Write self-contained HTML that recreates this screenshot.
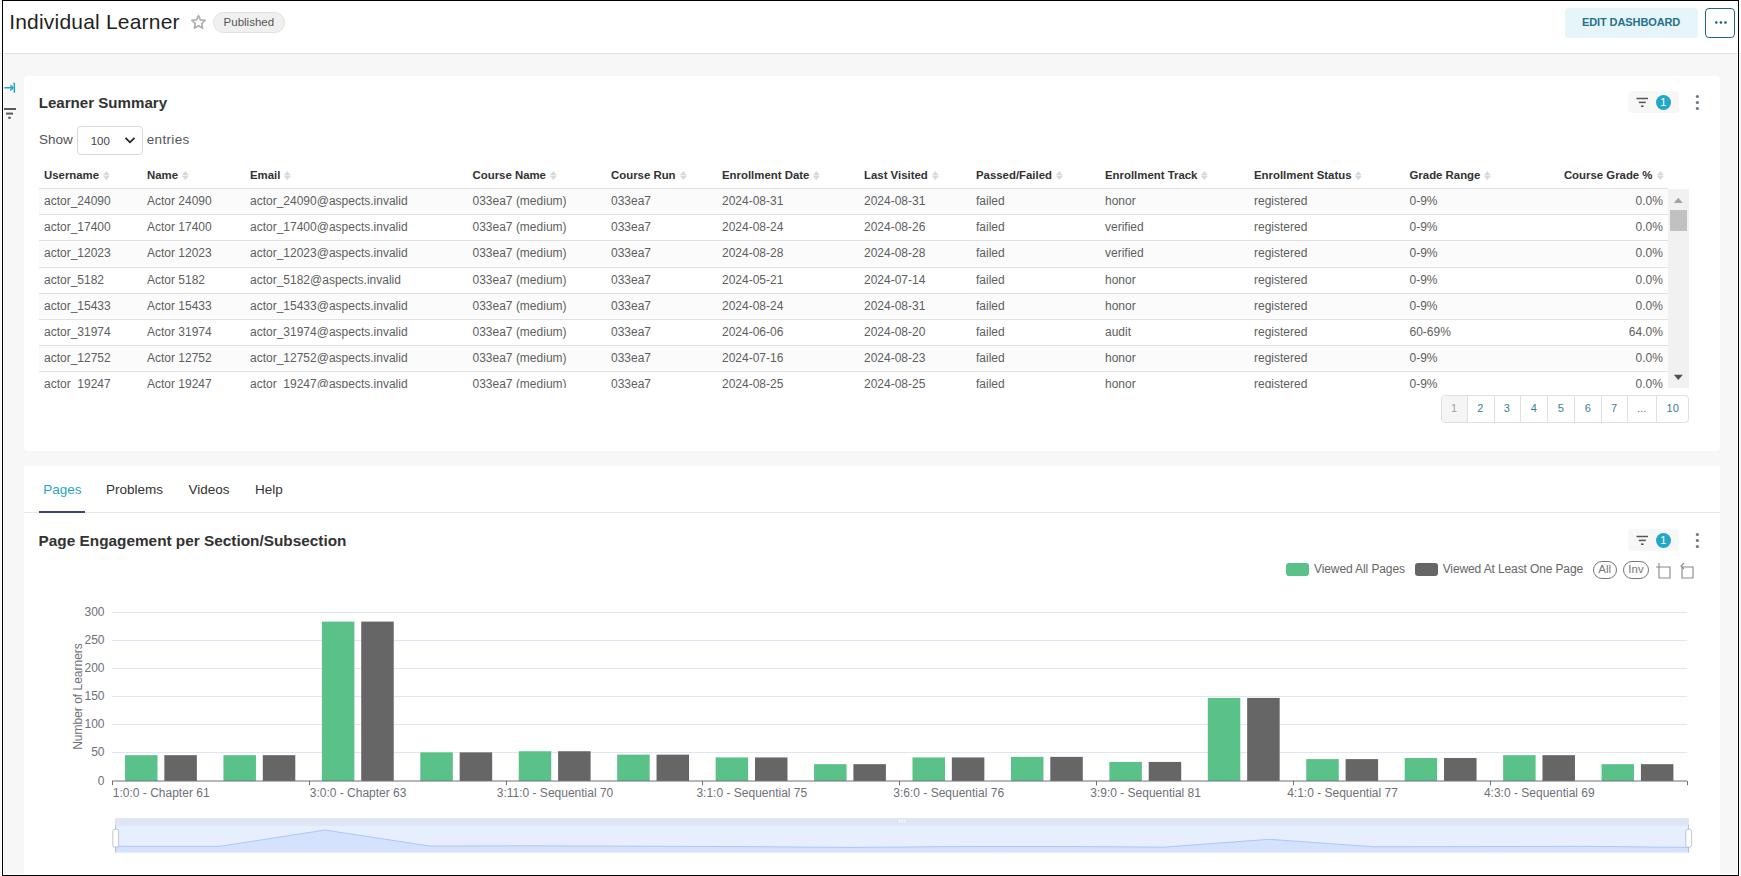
<!DOCTYPE html>
<html><head><meta charset="utf-8">
<style>
*{box-sizing:border-box;margin:0;padding:0}
html,body{width:1741px;height:876px;overflow:hidden;background:#f7f7f7;font-family:"Liberation Sans",sans-serif;color:#323232;position:relative}
.abs{position:absolute}
.t{position:absolute;white-space:nowrap;line-height:1}
#frame{position:absolute;left:1px;top:-1px;width:1739px;height:878px;border:1px solid #fff;pointer-events:none}
#frame>div{width:100%;height:100%;border:1px solid #000}
#frame>div>div{width:100%;height:100%;border:1px solid #fff}
</style></head><body>
<div class="abs" style="left:0px;top:0px;width:1741px;height:54px;background:#fff;border-bottom:1px solid #e0e0e0"></div>
<div class="t" style="left:9.2px;top:11.02px;font-size:21px;color:#1f1f1f;font-weight:normal;letter-spacing:0.2px">Individual Learner</div>
<svg class="abs" style="left:190px;top:14px" width="17" height="16" viewBox="0 0 17 16"><path d="M8.5 1.6l1.95 4.3 4.65.5-3.5 3.15 1 4.6L8.5 11.8l-4.1 2.35 1-4.6L1.9 6.4l4.65-.5z" fill="none" stroke="#b0b0b0" stroke-width="1.7" stroke-linejoin="round"/></svg>
<div class="abs" style="left:213px;top:12px;width:72px;height:21px;background:#f0f0f0;border:1px solid #e0e0e0;border-radius:11px"></div>
<div class="t" style="left:223.6px;top:17.27px;font-size:11.5px;color:#555;font-weight:normal;">Published</div>
<div class="abs" style="left:1565px;top:8px;width:133px;height:30px;background:#e6f5fa;border-radius:4px"></div>
<div class="t" style="left:1582.0px;top:17.29px;font-size:11px;color:#24718a;font-weight:bold;letter-spacing:-0.1px">EDIT DASHBOARD</div>
<div class="abs" style="left:1705px;top:8px;width:30px;height:30px;background:#fff;border:1px solid #1b6a83;border-radius:4px"></div>
<svg class="abs" style="left:1712px;top:20px" width="16" height="5"><circle cx="4.3" cy="2.5" r="1.3" fill="#1b5a70"/><circle cx="8.9" cy="2.5" r="1.3" fill="#1b5a70"/><circle cx="13.5" cy="2.5" r="1.3" fill="#1b5a70"/></svg>
<svg class="abs" style="left:3px;top:81px" width="14" height="13"><path d="M1.3 6.8h9M7.3 4.2l2.7 2.6-2.7 2.6" fill="none" stroke="#20a7c9" stroke-width="1.4"/><path d="M11.3 1.6v10.2" stroke="#20a7c9" stroke-width="1.5"/></svg>
<svg class="abs" style="left:3px;top:106px" width="15" height="15"><path d="M0 3h13" stroke="#5a5a5a" stroke-width="2"/><path d="M3 7.6h7" stroke="#5a5a5a" stroke-width="2"/><path d="M5.2 11.8h2.6" stroke="#5a5a5a" stroke-width="2"/></svg>
<div class="abs" style="left:24px;top:76px;width:1696px;height:375px;background:#fff;border-radius:4px"></div>
<div class="abs" style="left:24px;top:466px;width:1696px;height:420px;background:#fff"></div>
<div class="t" style="left:38.7px;top:95.22px;font-size:15.1px;color:#323232;font-weight:bold;">Learner Summary</div>
<div class="abs" style="left:1628px;top:91px;width:51px;height:22px;background:#f7f7f7;border-radius:4px"></div>
<svg class="abs" style="left:1636px;top:97px" width="13" height="11"><path d="M0.5 1.5h11.5" stroke="#555" stroke-width="1.5"/><path d="M2.8 5.4h7" stroke="#555" stroke-width="1.5"/><path d="M5 9.2h2.6" stroke="#555" stroke-width="1.6"/></svg>
<div class="abs" style="left:1655.7px;top:94.8px;width:15.4px;height:15.4px;border-radius:50%;background:#20a7c9;color:#fff;font-size:11px;font-weight:normal;line-height:15.4px;text-align:center">1</div>
<svg class="abs" style="left:1694px;top:94px" width="7" height="17"><circle cx="3.4" cy="2.5" r="1.6" fill="#6d7780"/><circle cx="3.4" cy="8.5" r="1.6" fill="#6d7780"/><circle cx="3.4" cy="14.5" r="1.6" fill="#6d7780"/></svg>
<div class="t" style="left:39.0px;top:132.67px;font-size:13.5px;color:#555;font-weight:normal;">Show</div>
<div class="abs" style="left:77px;top:126px;width:66px;height:29px;background:#fff;border:1px solid #d9d9d9;border-radius:4px"></div>
<div class="t" style="left:90.7px;top:136.27px;font-size:11.5px;color:#444;font-weight:normal;">100</div>
<svg class="abs" style="left:124px;top:136px" width="12" height="9"><path d="M1.5 1.8l4.5 4.5 4.5-4.5" fill="none" stroke="#222" stroke-width="1.8"/></svg>
<div class="t" style="left:146.7px;top:132.67px;font-size:13.5px;color:#555;font-weight:normal;letter-spacing:0.35px">entries</div>
<div class="t" style="left:44.0px;top:170.25px;font-size:11.4px;color:#323232;font-weight:bold;">Username</div>
<svg class="abs" style="left:103.0px;top:170.7px" width="8" height="10"><path d="M0.3 4.1L3.35 0.3 6.4 4.1z M0.3 5.1L3.35 9 6.4 5.1z" fill="#d9d9d9" stroke="#d9d9d9" stroke-width="0.4" stroke-linejoin="round"/></svg>
<div class="t" style="left:147.0px;top:170.25px;font-size:11.4px;color:#323232;font-weight:bold;">Name</div>
<svg class="abs" style="left:181.9px;top:170.7px" width="8" height="10"><path d="M0.3 4.1L3.35 0.3 6.4 4.1z M0.3 5.1L3.35 9 6.4 5.1z" fill="#d9d9d9" stroke="#d9d9d9" stroke-width="0.4" stroke-linejoin="round"/></svg>
<div class="t" style="left:250.0px;top:170.25px;font-size:11.4px;color:#323232;font-weight:bold;">Email</div>
<svg class="abs" style="left:284.3px;top:170.7px" width="8" height="10"><path d="M0.3 4.1L3.35 0.3 6.4 4.1z M0.3 5.1L3.35 9 6.4 5.1z" fill="#d9d9d9" stroke="#d9d9d9" stroke-width="0.4" stroke-linejoin="round"/></svg>
<div class="t" style="left:472.5px;top:170.25px;font-size:11.4px;color:#323232;font-weight:bold;">Course Name</div>
<svg class="abs" style="left:549.8px;top:170.7px" width="8" height="10"><path d="M0.3 4.1L3.35 0.3 6.4 4.1z M0.3 5.1L3.35 9 6.4 5.1z" fill="#d9d9d9" stroke="#d9d9d9" stroke-width="0.4" stroke-linejoin="round"/></svg>
<div class="t" style="left:611.0px;top:170.25px;font-size:11.4px;color:#323232;font-weight:bold;">Course Run</div>
<svg class="abs" style="left:679.5px;top:170.7px" width="8" height="10"><path d="M0.3 4.1L3.35 0.3 6.4 4.1z M0.3 5.1L3.35 9 6.4 5.1z" fill="#d9d9d9" stroke="#d9d9d9" stroke-width="0.4" stroke-linejoin="round"/></svg>
<div class="t" style="left:722.0px;top:170.25px;font-size:11.4px;color:#323232;font-weight:bold;">Enrollment Date</div>
<svg class="abs" style="left:813.2px;top:170.7px" width="8" height="10"><path d="M0.3 4.1L3.35 0.3 6.4 4.1z M0.3 5.1L3.35 9 6.4 5.1z" fill="#d9d9d9" stroke="#d9d9d9" stroke-width="0.4" stroke-linejoin="round"/></svg>
<div class="t" style="left:864.0px;top:170.25px;font-size:11.4px;color:#323232;font-weight:bold;">Last Visited</div>
<svg class="abs" style="left:931.6px;top:170.7px" width="8" height="10"><path d="M0.3 4.1L3.35 0.3 6.4 4.1z M0.3 5.1L3.35 9 6.4 5.1z" fill="#d9d9d9" stroke="#d9d9d9" stroke-width="0.4" stroke-linejoin="round"/></svg>
<div class="t" style="left:976.0px;top:170.25px;font-size:11.4px;color:#323232;font-weight:bold;">Passed/Failed</div>
<svg class="abs" style="left:1055.9px;top:170.7px" width="8" height="10"><path d="M0.3 4.1L3.35 0.3 6.4 4.1z M0.3 5.1L3.35 9 6.4 5.1z" fill="#d9d9d9" stroke="#d9d9d9" stroke-width="0.4" stroke-linejoin="round"/></svg>
<div class="t" style="left:1105.0px;top:170.25px;font-size:11.4px;color:#323232;font-weight:bold;">Enrollment Track</div>
<svg class="abs" style="left:1201.3px;top:170.7px" width="8" height="10"><path d="M0.3 4.1L3.35 0.3 6.4 4.1z M0.3 5.1L3.35 9 6.4 5.1z" fill="#d9d9d9" stroke="#d9d9d9" stroke-width="0.4" stroke-linejoin="round"/></svg>
<div class="t" style="left:1254.0px;top:170.25px;font-size:11.4px;color:#323232;font-weight:bold;">Enrollment Status</div>
<svg class="abs" style="left:1355.4px;top:170.7px" width="8" height="10"><path d="M0.3 4.1L3.35 0.3 6.4 4.1z M0.3 5.1L3.35 9 6.4 5.1z" fill="#d9d9d9" stroke="#d9d9d9" stroke-width="0.4" stroke-linejoin="round"/></svg>
<div class="t" style="left:1409.5px;top:170.25px;font-size:11.4px;color:#323232;font-weight:bold;">Grade Range</div>
<svg class="abs" style="left:1484.3px;top:170.7px" width="8" height="10"><path d="M0.3 4.1L3.35 0.3 6.4 4.1z M0.3 5.1L3.35 9 6.4 5.1z" fill="#d9d9d9" stroke="#d9d9d9" stroke-width="0.4" stroke-linejoin="round"/></svg>
<div class="t" style="right:88.5px;top:170.25px;font-size:11.4px;color:#323232;font-weight:bold;">Course Grade %</div>
<svg class="abs" style="left:1656.6px;top:170.7px" width="8" height="10"><path d="M0.3 4.1L3.35 0.3 6.4 4.1z M0.3 5.1L3.35 9 6.4 5.1z" fill="#d9d9d9" stroke="#d9d9d9" stroke-width="0.4" stroke-linejoin="round"/></svg>
<div class="abs" style="left:39px;top:188px;width:1629px;height:1px;background:#e0e0e0"></div>
<div class="abs" style="left:39px;top:189px;width:1629px;height:199px;overflow:hidden">
<div class="abs" style="left:0;top:0px;width:1629px;height:24px;background:#fbfbfb"></div>
<div class="abs" style="left:0;top:25px;width:1629px;height:1px;background:#e0e0e0"></div>
<div class="t" style="left:5.0px;top:6.24px;font-size:12px;color:#5e5e5e">actor_24090</div>
<div class="t" style="left:108.0px;top:6.24px;font-size:12px;color:#5e5e5e">Actor 24090</div>
<div class="t" style="left:211.0px;top:6.24px;font-size:12px;color:#5e5e5e">actor_24090@aspects.invalid</div>
<div class="t" style="left:433.5px;top:6.24px;font-size:12px;color:#5e5e5e">033ea7 (medium)</div>
<div class="t" style="left:572.0px;top:6.24px;font-size:12px;color:#5e5e5e">033ea7</div>
<div class="t" style="left:683.0px;top:6.24px;font-size:12px;color:#5e5e5e">2024-08-31</div>
<div class="t" style="left:825.0px;top:6.24px;font-size:12px;color:#5e5e5e">2024-08-31</div>
<div class="t" style="left:937.0px;top:6.24px;font-size:12px;color:#5e5e5e">failed</div>
<div class="t" style="left:1066.0px;top:6.24px;font-size:12px;color:#5e5e5e">honor</div>
<div class="t" style="left:1215.0px;top:6.24px;font-size:12px;color:#5e5e5e">registered</div>
<div class="t" style="left:1370.5px;top:6.24px;font-size:12px;color:#5e5e5e">0-9%</div>
<div class="t" style="right:5.2px;top:6.24px;font-size:12px;color:#5e5e5e">0.0%</div>
<div class="abs" style="left:0;top:26px;width:1629px;height:24px;background:#fff"></div>
<div class="abs" style="left:0;top:51px;width:1629px;height:1px;background:#e0e0e0"></div>
<div class="t" style="left:5.0px;top:32.24px;font-size:12px;color:#5e5e5e">actor_17400</div>
<div class="t" style="left:108.0px;top:32.24px;font-size:12px;color:#5e5e5e">Actor 17400</div>
<div class="t" style="left:211.0px;top:32.24px;font-size:12px;color:#5e5e5e">actor_17400@aspects.invalid</div>
<div class="t" style="left:433.5px;top:32.24px;font-size:12px;color:#5e5e5e">033ea7 (medium)</div>
<div class="t" style="left:572.0px;top:32.24px;font-size:12px;color:#5e5e5e">033ea7</div>
<div class="t" style="left:683.0px;top:32.24px;font-size:12px;color:#5e5e5e">2024-08-24</div>
<div class="t" style="left:825.0px;top:32.24px;font-size:12px;color:#5e5e5e">2024-08-26</div>
<div class="t" style="left:937.0px;top:32.24px;font-size:12px;color:#5e5e5e">failed</div>
<div class="t" style="left:1066.0px;top:32.24px;font-size:12px;color:#5e5e5e">verified</div>
<div class="t" style="left:1215.0px;top:32.24px;font-size:12px;color:#5e5e5e">registered</div>
<div class="t" style="left:1370.5px;top:32.24px;font-size:12px;color:#5e5e5e">0-9%</div>
<div class="t" style="right:5.2px;top:32.24px;font-size:12px;color:#5e5e5e">0.0%</div>
<div class="abs" style="left:0;top:52px;width:1629px;height:25px;background:#fbfbfb"></div>
<div class="abs" style="left:0;top:78px;width:1629px;height:1px;background:#e0e0e0"></div>
<div class="t" style="left:5.0px;top:58.24px;font-size:12px;color:#5e5e5e">actor_12023</div>
<div class="t" style="left:108.0px;top:58.24px;font-size:12px;color:#5e5e5e">Actor 12023</div>
<div class="t" style="left:211.0px;top:58.24px;font-size:12px;color:#5e5e5e">actor_12023@aspects.invalid</div>
<div class="t" style="left:433.5px;top:58.24px;font-size:12px;color:#5e5e5e">033ea7 (medium)</div>
<div class="t" style="left:572.0px;top:58.24px;font-size:12px;color:#5e5e5e">033ea7</div>
<div class="t" style="left:683.0px;top:58.24px;font-size:12px;color:#5e5e5e">2024-08-28</div>
<div class="t" style="left:825.0px;top:58.24px;font-size:12px;color:#5e5e5e">2024-08-28</div>
<div class="t" style="left:937.0px;top:58.24px;font-size:12px;color:#5e5e5e">failed</div>
<div class="t" style="left:1066.0px;top:58.24px;font-size:12px;color:#5e5e5e">verified</div>
<div class="t" style="left:1215.0px;top:58.24px;font-size:12px;color:#5e5e5e">registered</div>
<div class="t" style="left:1370.5px;top:58.24px;font-size:12px;color:#5e5e5e">0-9%</div>
<div class="t" style="right:5.2px;top:58.24px;font-size:12px;color:#5e5e5e">0.0%</div>
<div class="abs" style="left:0;top:79px;width:1629px;height:24px;background:#fff"></div>
<div class="abs" style="left:0;top:104px;width:1629px;height:1px;background:#e0e0e0"></div>
<div class="t" style="left:5.0px;top:85.24px;font-size:12px;color:#5e5e5e">actor_5182</div>
<div class="t" style="left:108.0px;top:85.24px;font-size:12px;color:#5e5e5e">Actor 5182</div>
<div class="t" style="left:211.0px;top:85.24px;font-size:12px;color:#5e5e5e">actor_5182@aspects.invalid</div>
<div class="t" style="left:433.5px;top:85.24px;font-size:12px;color:#5e5e5e">033ea7 (medium)</div>
<div class="t" style="left:572.0px;top:85.24px;font-size:12px;color:#5e5e5e">033ea7</div>
<div class="t" style="left:683.0px;top:85.24px;font-size:12px;color:#5e5e5e">2024-05-21</div>
<div class="t" style="left:825.0px;top:85.24px;font-size:12px;color:#5e5e5e">2024-07-14</div>
<div class="t" style="left:937.0px;top:85.24px;font-size:12px;color:#5e5e5e">failed</div>
<div class="t" style="left:1066.0px;top:85.24px;font-size:12px;color:#5e5e5e">honor</div>
<div class="t" style="left:1215.0px;top:85.24px;font-size:12px;color:#5e5e5e">registered</div>
<div class="t" style="left:1370.5px;top:85.24px;font-size:12px;color:#5e5e5e">0-9%</div>
<div class="t" style="right:5.2px;top:85.24px;font-size:12px;color:#5e5e5e">0.0%</div>
<div class="abs" style="left:0;top:105px;width:1629px;height:24px;background:#fbfbfb"></div>
<div class="abs" style="left:0;top:130px;width:1629px;height:1px;background:#e0e0e0"></div>
<div class="t" style="left:5.0px;top:111.24px;font-size:12px;color:#5e5e5e">actor_15433</div>
<div class="t" style="left:108.0px;top:111.24px;font-size:12px;color:#5e5e5e">Actor 15433</div>
<div class="t" style="left:211.0px;top:111.24px;font-size:12px;color:#5e5e5e">actor_15433@aspects.invalid</div>
<div class="t" style="left:433.5px;top:111.24px;font-size:12px;color:#5e5e5e">033ea7 (medium)</div>
<div class="t" style="left:572.0px;top:111.24px;font-size:12px;color:#5e5e5e">033ea7</div>
<div class="t" style="left:683.0px;top:111.24px;font-size:12px;color:#5e5e5e">2024-08-24</div>
<div class="t" style="left:825.0px;top:111.24px;font-size:12px;color:#5e5e5e">2024-08-31</div>
<div class="t" style="left:937.0px;top:111.24px;font-size:12px;color:#5e5e5e">failed</div>
<div class="t" style="left:1066.0px;top:111.24px;font-size:12px;color:#5e5e5e">honor</div>
<div class="t" style="left:1215.0px;top:111.24px;font-size:12px;color:#5e5e5e">registered</div>
<div class="t" style="left:1370.5px;top:111.24px;font-size:12px;color:#5e5e5e">0-9%</div>
<div class="t" style="right:5.2px;top:111.24px;font-size:12px;color:#5e5e5e">0.0%</div>
<div class="abs" style="left:0;top:131px;width:1629px;height:24px;background:#fff"></div>
<div class="abs" style="left:0;top:156px;width:1629px;height:1px;background:#e0e0e0"></div>
<div class="t" style="left:5.0px;top:137.24px;font-size:12px;color:#5e5e5e">actor_31974</div>
<div class="t" style="left:108.0px;top:137.24px;font-size:12px;color:#5e5e5e">Actor 31974</div>
<div class="t" style="left:211.0px;top:137.24px;font-size:12px;color:#5e5e5e">actor_31974@aspects.invalid</div>
<div class="t" style="left:433.5px;top:137.24px;font-size:12px;color:#5e5e5e">033ea7 (medium)</div>
<div class="t" style="left:572.0px;top:137.24px;font-size:12px;color:#5e5e5e">033ea7</div>
<div class="t" style="left:683.0px;top:137.24px;font-size:12px;color:#5e5e5e">2024-06-06</div>
<div class="t" style="left:825.0px;top:137.24px;font-size:12px;color:#5e5e5e">2024-08-20</div>
<div class="t" style="left:937.0px;top:137.24px;font-size:12px;color:#5e5e5e">failed</div>
<div class="t" style="left:1066.0px;top:137.24px;font-size:12px;color:#5e5e5e">audit</div>
<div class="t" style="left:1215.0px;top:137.24px;font-size:12px;color:#5e5e5e">registered</div>
<div class="t" style="left:1370.5px;top:137.24px;font-size:12px;color:#5e5e5e">60-69%</div>
<div class="t" style="right:5.2px;top:137.24px;font-size:12px;color:#5e5e5e">64.0%</div>
<div class="abs" style="left:0;top:157px;width:1629px;height:24px;background:#fbfbfb"></div>
<div class="abs" style="left:0;top:182px;width:1629px;height:1px;background:#e0e0e0"></div>
<div class="t" style="left:5.0px;top:163.24px;font-size:12px;color:#5e5e5e">actor_12752</div>
<div class="t" style="left:108.0px;top:163.24px;font-size:12px;color:#5e5e5e">Actor 12752</div>
<div class="t" style="left:211.0px;top:163.24px;font-size:12px;color:#5e5e5e">actor_12752@aspects.invalid</div>
<div class="t" style="left:433.5px;top:163.24px;font-size:12px;color:#5e5e5e">033ea7 (medium)</div>
<div class="t" style="left:572.0px;top:163.24px;font-size:12px;color:#5e5e5e">033ea7</div>
<div class="t" style="left:683.0px;top:163.24px;font-size:12px;color:#5e5e5e">2024-07-16</div>
<div class="t" style="left:825.0px;top:163.24px;font-size:12px;color:#5e5e5e">2024-08-23</div>
<div class="t" style="left:937.0px;top:163.24px;font-size:12px;color:#5e5e5e">failed</div>
<div class="t" style="left:1066.0px;top:163.24px;font-size:12px;color:#5e5e5e">honor</div>
<div class="t" style="left:1215.0px;top:163.24px;font-size:12px;color:#5e5e5e">registered</div>
<div class="t" style="left:1370.5px;top:163.24px;font-size:12px;color:#5e5e5e">0-9%</div>
<div class="t" style="right:5.2px;top:163.24px;font-size:12px;color:#5e5e5e">0.0%</div>
<div class="abs" style="left:0;top:183px;width:1629px;height:29px;background:#fff"></div>
<div class="abs" style="left:0;top:213px;width:1629px;height:1px;background:#e0e0e0"></div>
<div class="t" style="left:5.0px;top:189.24px;font-size:12px;color:#5e5e5e">actor_19247</div>
<div class="t" style="left:108.0px;top:189.24px;font-size:12px;color:#5e5e5e">Actor 19247</div>
<div class="t" style="left:211.0px;top:189.24px;font-size:12px;color:#5e5e5e">actor_19247@aspects.invalid</div>
<div class="t" style="left:433.5px;top:189.24px;font-size:12px;color:#5e5e5e">033ea7 (medium)</div>
<div class="t" style="left:572.0px;top:189.24px;font-size:12px;color:#5e5e5e">033ea7</div>
<div class="t" style="left:683.0px;top:189.24px;font-size:12px;color:#5e5e5e">2024-08-25</div>
<div class="t" style="left:825.0px;top:189.24px;font-size:12px;color:#5e5e5e">2024-08-25</div>
<div class="t" style="left:937.0px;top:189.24px;font-size:12px;color:#5e5e5e">failed</div>
<div class="t" style="left:1066.0px;top:189.24px;font-size:12px;color:#5e5e5e">honor</div>
<div class="t" style="left:1215.0px;top:189.24px;font-size:12px;color:#5e5e5e">registered</div>
<div class="t" style="left:1370.5px;top:189.24px;font-size:12px;color:#5e5e5e">0-9%</div>
<div class="t" style="right:5.2px;top:189.24px;font-size:12px;color:#5e5e5e">0.0%</div>
</div>
<div class="abs" style="left:1668px;top:189px;width:21px;height:199px;background:#f1f1f1"></div>
<svg class="abs" style="left:1673px;top:197px" width="11" height="7"><path d="M0.8 6L5.3 0.8 9.8 6z" fill="#a3a3a3"/></svg>
<div class="abs" style="left:1670px;top:210px;width:17px;height:21px;background:#c1c1c1"></div>
<svg class="abs" style="left:1673px;top:374px" width="11" height="7"><path d="M0.8 0.8L5.3 6 9.8 0.8z" fill="#505050"/></svg>
<div class="abs" style="left:1441px;top:395px;width:248px;height:28px;border:1px solid #e0e0e0;border-radius:4px;background:#fff"></div>
<div class="abs" style="left:1442px;top:396px;width:25px;height:26px;background:#f5f5f5;border-radius:3px 0 0 3px"></div>
<div class="abs" style="left:1467px;top:396px;width:1px;height:26px;background:#e0e0e0"></div>
<div class="abs" style="left:1494px;top:396px;width:1px;height:26px;background:#e0e0e0"></div>
<div class="abs" style="left:1520px;top:396px;width:1px;height:26px;background:#e0e0e0"></div>
<div class="abs" style="left:1547px;top:396px;width:1px;height:26px;background:#e0e0e0"></div>
<div class="abs" style="left:1574px;top:396px;width:1px;height:26px;background:#e0e0e0"></div>
<div class="abs" style="left:1601px;top:396px;width:1px;height:26px;background:#e0e0e0"></div>
<div class="abs" style="left:1627px;top:396px;width:1px;height:26px;background:#e0e0e0"></div>
<div class="abs" style="left:1656px;top:396px;width:1px;height:26px;background:#e0e0e0"></div>
<div class="t" style="left:1441.0px;width:26.0px;text-align:center;top:402.59px;font-size:11px;color:#a0a0a0">1</div>
<div class="t" style="left:1467.0px;width:26.5px;text-align:center;top:402.59px;font-size:11px;color:#3a7d98">2</div>
<div class="t" style="left:1493.5px;width:26.8px;text-align:center;top:402.59px;font-size:11px;color:#3a7d98">3</div>
<div class="t" style="left:1520.3px;width:27.0px;text-align:center;top:402.59px;font-size:11px;color:#3a7d98">4</div>
<div class="t" style="left:1547.3px;width:27.1px;text-align:center;top:402.59px;font-size:11px;color:#3a7d98">5</div>
<div class="t" style="left:1574.4px;width:26.8px;text-align:center;top:402.59px;font-size:11px;color:#3a7d98">6</div>
<div class="t" style="left:1601.2px;width:25.8px;text-align:center;top:402.59px;font-size:11px;color:#3a7d98">7</div>
<div class="t" style="left:1627.0px;width:29.3px;text-align:center;top:402.59px;font-size:11px;color:#3a7d98">...</div>
<div class="t" style="left:1656.3px;width:32.7px;text-align:center;top:402.59px;font-size:11px;color:#3a7d98">10</div>
<div class="t" style="left:43.2px;top:483.17px;font-size:13.5px;color:#1fa6cc;font-weight:normal;">Pages</div>
<div class="t" style="left:106.0px;top:483.17px;font-size:13.5px;color:#323232;font-weight:normal;">Problems</div>
<div class="t" style="left:188.5px;top:483.17px;font-size:13.5px;color:#323232;font-weight:normal;">Videos</div>
<div class="t" style="left:255.0px;top:483.17px;font-size:13.5px;color:#323232;font-weight:normal;">Help</div>
<div class="abs" style="left:24px;top:512px;width:1696px;height:1px;background:#e8e8e8"></div>
<div class="abs" style="left:39px;top:511px;width:46px;height:2px;background:#3a4576"></div>
<div class="t" style="left:38.6px;top:533.01px;font-size:15.35px;color:#323232;font-weight:bold;">Page Engagement per Section/Subsection</div>
<div class="abs" style="left:1628px;top:529px;width:51px;height:22px;background:#f7f7f7;border-radius:4px"></div>
<svg class="abs" style="left:1636px;top:535px" width="13" height="11"><path d="M0.5 1.5h11.5" stroke="#555" stroke-width="1.5"/><path d="M2.8 5.4h7" stroke="#555" stroke-width="1.5"/><path d="M5 9.2h2.6" stroke="#555" stroke-width="1.6"/></svg>
<div class="abs" style="left:1655.7px;top:532.8px;width:15.4px;height:15.4px;border-radius:50%;background:#20a7c9;color:#fff;font-size:11px;font-weight:normal;line-height:15.4px;text-align:center">1</div>
<svg class="abs" style="left:1694px;top:532px" width="7" height="17"><circle cx="3.4" cy="2.5" r="1.6" fill="#6d7780"/><circle cx="3.4" cy="8.5" r="1.6" fill="#6d7780"/><circle cx="3.4" cy="14.5" r="1.6" fill="#6d7780"/></svg>
<div class="abs" style="left:1285.5px;top:563.3px;width:23.3px;height:12.5px;background:#5ac189;border-radius:3px"></div>
<div class="t" style="left:1314.0px;top:562.54px;font-size:12px;color:#666;font-weight:normal;letter-spacing:-0.1px">Viewed All Pages</div>
<div class="abs" style="left:1414.5px;top:563.3px;width:23.3px;height:12.5px;background:#666;border-radius:3px"></div>
<div class="t" style="left:1442.7px;top:562.54px;font-size:12px;color:#666;font-weight:normal;letter-spacing:-0.12px">Viewed At Least One Page</div>
<div class="abs" style="left:1593px;top:560.5px;width:23.5px;height:18px;border:1px solid #777;border-radius:9px"></div>
<div class="t" style="left:1593px;width:23.5px;text-align:center;top:564px;font-size:11.5px;color:#777">All</div>
<div class="abs" style="left:1623px;top:560.5px;width:26px;height:18px;border:1px solid #777;border-radius:9px"></div>
<div class="t" style="left:1623px;width:26px;text-align:center;top:564px;font-size:11.5px;color:#777">Inv</div>
<svg class="abs" style="left:1655px;top:562px" width="42" height="17"><g fill="none" stroke="#888" stroke-width="1.1"><path d="M4 1v15h11V5H1"/><path d="M27 5h11v11H27V5"/><path d="M29 1l-3 3 3 3"/></g></svg>
<svg class="abs" style="left:0;top:0" width="1741" height="876" viewBox="0 0 1741 876" font-family="Liberation Sans, sans-serif"><line x1="112" x2="1687" y1="752.5" y2="752.5" stroke="#e0e6f1" stroke-width="1"/><line x1="112" x2="1687" y1="724.5" y2="724.5" stroke="#e0e6f1" stroke-width="1"/><line x1="112" x2="1687" y1="696.5" y2="696.5" stroke="#e0e6f1" stroke-width="1"/><line x1="112" x2="1687" y1="668.5" y2="668.5" stroke="#e0e6f1" stroke-width="1"/><line x1="112" x2="1687" y1="640.5" y2="640.5" stroke="#e0e6f1" stroke-width="1"/><line x1="112" x2="1687" y1="612.5" y2="612.5" stroke="#e0e6f1" stroke-width="1"/><rect x="125.00" y="755.18" width="32.5" height="25.82" fill="#5ac189"/><rect x="164.35" y="755.18" width="32.5" height="25.82" fill="#666666"/><rect x="223.44" y="755.18" width="32.5" height="25.82" fill="#5ac189"/><rect x="262.79" y="755.18" width="32.5" height="25.82" fill="#666666"/><rect x="321.88" y="621.59" width="32.5" height="159.41" fill="#5ac189"/><rect x="361.23" y="621.59" width="32.5" height="159.41" fill="#666666"/><rect x="420.31" y="752.37" width="32.5" height="28.63" fill="#5ac189"/><rect x="459.66" y="752.37" width="32.5" height="28.63" fill="#666666"/><rect x="518.75" y="751.25" width="32.5" height="29.75" fill="#5ac189"/><rect x="558.10" y="751.25" width="32.5" height="29.75" fill="#666666"/><rect x="617.19" y="754.62" width="32.5" height="26.38" fill="#5ac189"/><rect x="656.54" y="754.62" width="32.5" height="26.38" fill="#666666"/><rect x="715.62" y="757.43" width="32.5" height="23.57" fill="#5ac189"/><rect x="754.98" y="757.43" width="32.5" height="23.57" fill="#666666"/><rect x="814.06" y="764.16" width="32.5" height="16.84" fill="#5ac189"/><rect x="853.41" y="764.16" width="32.5" height="16.84" fill="#666666"/><rect x="912.50" y="757.43" width="32.5" height="23.57" fill="#5ac189"/><rect x="951.85" y="757.43" width="32.5" height="23.57" fill="#666666"/><rect x="1010.94" y="756.86" width="32.5" height="24.14" fill="#5ac189"/><rect x="1050.29" y="756.86" width="32.5" height="24.14" fill="#666666"/><rect x="1109.38" y="761.92" width="32.5" height="19.08" fill="#5ac189"/><rect x="1148.72" y="761.92" width="32.5" height="19.08" fill="#666666"/><rect x="1207.81" y="697.93" width="32.5" height="83.07" fill="#5ac189"/><rect x="1247.16" y="697.93" width="32.5" height="83.07" fill="#666666"/><rect x="1306.25" y="759.11" width="32.5" height="21.89" fill="#5ac189"/><rect x="1345.60" y="759.11" width="32.5" height="21.89" fill="#666666"/><rect x="1404.69" y="757.99" width="32.5" height="23.01" fill="#5ac189"/><rect x="1444.04" y="757.99" width="32.5" height="23.01" fill="#666666"/><rect x="1503.12" y="755.18" width="32.5" height="25.82" fill="#5ac189"/><rect x="1542.47" y="755.18" width="32.5" height="25.82" fill="#666666"/><rect x="1601.56" y="764.16" width="32.5" height="16.84" fill="#5ac189"/><rect x="1640.91" y="764.16" width="32.5" height="16.84" fill="#666666"/><line x1="112" x2="1687" y1="781" y2="781" stroke="#6e7079" stroke-width="1"/><line x1="112.5" x2="112.5" y1="781" y2="785.3" stroke="#6e7079" stroke-width="1"/><line x1="309.5" x2="309.5" y1="781" y2="785.3" stroke="#6e7079" stroke-width="1"/><line x1="506.5" x2="506.5" y1="781" y2="785.3" stroke="#6e7079" stroke-width="1"/><line x1="702.5" x2="702.5" y1="781" y2="785.3" stroke="#6e7079" stroke-width="1"/><line x1="899.5" x2="899.5" y1="781" y2="785.3" stroke="#6e7079" stroke-width="1"/><line x1="1096.5" x2="1096.5" y1="781" y2="785.3" stroke="#6e7079" stroke-width="1"/><line x1="1293.5" x2="1293.5" y1="781" y2="785.3" stroke="#6e7079" stroke-width="1"/><line x1="1490.5" x2="1490.5" y1="781" y2="785.3" stroke="#6e7079" stroke-width="1"/><line x1="1687.5" x2="1687.5" y1="781" y2="785.3" stroke="#6e7079" stroke-width="1"/><text x="161.2" y="796.7" font-size="12" fill="#6e7079" text-anchor="middle">1:0:0 - Chapter 61</text><text x="358.1" y="796.7" font-size="12" fill="#6e7079" text-anchor="middle">3:0:0 - Chapter 63</text><text x="555.0" y="796.7" font-size="12" fill="#6e7079" text-anchor="middle">3:11:0 - Sequential 70</text><text x="751.8" y="796.7" font-size="12" fill="#6e7079" text-anchor="middle">3:1:0 - Sequential 75</text><text x="948.7" y="796.7" font-size="12" fill="#6e7079" text-anchor="middle">3:6:0 - Sequential 76</text><text x="1145.6" y="796.7" font-size="12" fill="#6e7079" text-anchor="middle">3:9:0 - Sequential 81</text><text x="1342.5" y="796.7" font-size="12" fill="#6e7079" text-anchor="middle">4:1:0 - Sequential 77</text><text x="1539.3" y="796.7" font-size="12" fill="#6e7079" text-anchor="middle">4:3:0 - Sequential 69</text><text x="104.5" y="785.3" font-size="12" fill="#6e7079" text-anchor="end">0</text><text x="104.5" y="756.3" font-size="12" fill="#6e7079" text-anchor="end">50</text><text x="104.5" y="728.3" font-size="12" fill="#6e7079" text-anchor="end">100</text><text x="104.5" y="700.3" font-size="12" fill="#6e7079" text-anchor="end">150</text><text x="104.5" y="672.3" font-size="12" fill="#6e7079" text-anchor="end">200</text><text x="104.5" y="644.3" font-size="12" fill="#6e7079" text-anchor="end">250</text><text x="104.5" y="616.3" font-size="12" fill="#6e7079" text-anchor="end">300</text><text transform="translate(81.5,696.5) rotate(-90)" font-size="12" fill="#6e7079" text-anchor="middle">Number of Learners</text><rect x="115" y="818" width="1574" height="6.7999999999999545" fill="#e0e6f3"/><rect x="115" y="824.8" width="1574" height="27.800000000000068" fill="#e7efff"/><line x1="115" x2="1689" y1="825.0999999999999" y2="825.0999999999999" stroke="#d2dbee" stroke-width="0.6"/><g fill="#f6f8fc"><rect x="899" y="819.8" width="1.2" height="3"/><rect x="901.5" y="819.8" width="1.2" height="3"/><rect x="904" y="819.8" width="1.2" height="3"/></g><polygon points="115,852.6 115.0,846.3 219.9,846.3 324.9,830.0 429.8,846.0 534.7,845.8 639.7,846.2 744.6,846.6 849.5,847.4 954.5,846.6 1059.4,846.5 1164.3,847.1 1269.3,839.3 1374.2,846.8 1479.1,846.6 1584.1,846.3 1689.0,847.4 1689,852.6" fill="#d5e2fd"/><polyline points="115.0,846.3 219.9,846.3 324.9,830.0 429.8,846.0 534.7,845.8 639.7,846.2 744.6,846.6 849.5,847.4 954.5,846.6 1059.4,846.5 1164.3,847.1 1269.3,839.3 1374.2,846.8 1479.1,846.6 1584.1,846.3 1689.0,847.4" fill="none" stroke="#9bb6f5" stroke-width="0.7"/><line x1="115.5" x2="115.5" y1="824.8" y2="852.6" stroke="#acb8d1" stroke-width="0.8"/><line x1="1688.5" x2="1688.5" y1="824.8" y2="852.6" stroke="#acb8d1" stroke-width="0.8"/><rect x="112.8" y="829.3" width="5.8" height="17.8" rx="2" fill="#fff" stroke="#acb8d1" stroke-width="0.8"/><rect x="1685.8" y="829.3" width="5.8" height="17.8" rx="2" fill="#fff" stroke="#acb8d1" stroke-width="0.8"/></svg>
<div id="frame"><div><div></div></div></div>
</body></html>
